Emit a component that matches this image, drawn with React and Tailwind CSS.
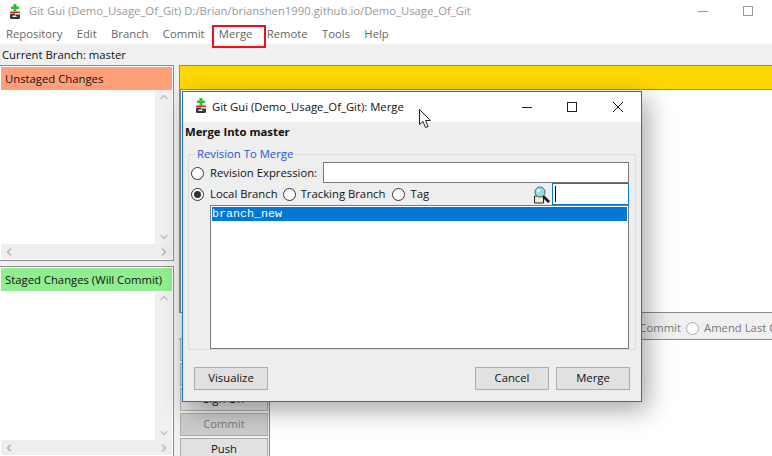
import { ChevronUp, ChevronDown, ChevronLeft, ChevronRight } from "lucide-react";

const menus = ["Repository", "Edit", "Branch", "Commit", "Merge", "Remote", "Tools", "Help"];

const GitIcon = ({ className }) => (
    <svg className={className} viewBox="0 0 12 16" width="12" height="16">
        <path d="M4.500 0h3v2.500H10v2.500H7.500v2.500h-3V5H2V2.500h2.500z" fill="#2fbf2f" />
        <rect x="1" y="7.500" width="10" height="1.500" fill="#d8232a" />
        <path d="M6 9.500H2.500a1.500 1.500 0 0 0-1.500 1.500v2.500A1.500 1.500 0 0 0 2.500 15h7A1.500 1.500 0 0 0 11 13.500V10.500H6.500v2H8.500v.5h-5V11.500H6z" fill="#333" />
    </svg>
);

const Radio = ({ checked }) => (
    <span className="w-[13px] h-[13px] rounded-full border border-[#333] bg-white flex items-center justify-center shrink-0">
        {checked && <span className="w-[7px] h-[7px] rounded-full bg-[#333]" />}
    </span>
);

const ListPanel = ({ title, color, className }) => (
    <div className={"border border-[#8a8a8a] border-l-0 p-[1px] flex flex-col bg-white " + className}>
        <div className={"h-[23px] flex items-center pl-[4px] pt-[1px] text-[11.3px] text-[#111] whitespace-nowrap " + color}>{title}</div>
        <div className="flex-1 flex min-h-0">
            <div className="flex-1" />
            <div className="w-[17px] flex flex-col items-center justify-between bg-[#f0f0f0] py-[1px] text-[#c4c4c4]">
                <ChevronUp size={12} strokeWidth={3} />
                <ChevronDown size={12} strokeWidth={3} />
            </div>
        </div>
        <div className="h-[15px] bg-[#eeeeee] flex items-center justify-between px-[2px] text-[#b5b5b5]">
            <ChevronLeft size={12} strokeWidth={3} />
            <ChevronRight size={12} strokeWidth={3} />
        </div>
    </div>
);

const SideButton = ({ label, disabled }) => (
    <div className={"h-[23px] shrink-0 border border-[#adadad] flex items-center justify-center text-[11.3px] " + (disabled ? "bg-[#cccccc] text-[#777]" : "bg-[#e1e1e1] text-[#111]")}>
        {label}
    </div>
);

const DialogButton = ({ label }) => (
    <div className="w-[74px] h-[23px] border border-[#adadad] bg-[#e1e1e1] flex items-center justify-center text-[11.3px] text-[#111]">
        {label}
    </div>
);

const MergeDialog = () => (
    <div className="absolute left-[182px] top-[91px] w-[460px] h-[311px] border border-[#1a76c4] bg-[#eeeeee] flex flex-col shadow-[6px_8px_24px_rgba(0,0,0,0.35)]">
        <div className="h-[30px] bg-white flex items-center shrink-0">
            <GitIcon className="ml-[12px] mr-[5px] mt-[-3px]" />
            <span className="text-[11.3px] text-[#111] pt-[1px]">Git Gui (Demo_Usage_Of_Git): Merge</span>
            <div className="ml-auto flex items-center text-[#222]">
                <svg width="12" height="12" viewBox="0 0 12 12" className="mr-[33px]"><path d="M1 6.500h10" stroke="#222" /></svg>
                <svg width="12" height="12" viewBox="0 0 12 12" className="mr-[34px]"><rect x="1.500" y="1.500" width="9" height="9" fill="none" stroke="#222" /></svg>
                <svg width="12" height="12" viewBox="0 0 12 12" className="mr-[17px]"><path d="M1 1l10 10M11 1L1 11" stroke="#222" /></svg>
            </div>
        </div>
        <div className="h-[21px] pl-[2px] flex items-center font-bold text-[11.3px] text-[#111] shrink-0">Merge Into master</div>
        <div className="relative ml-[5px] mr-[5px] mt-[11px] h-[196px] border border-[#dcdcdc] pl-[2px] pr-[6px] pt-[7px] flex flex-col shrink-0">
            <span className="absolute left-[6px] top-[-9px] bg-[#eeeeee] px-[2px] text-[11.3px] leading-[16px] text-[#2a52d8]">Revision To Merge</span>
            <div className="h-[21px] flex items-center text-[11.3px] text-[#111] shrink-0">
                <span className="mr-[6px] mt-[1px]"><Radio /></span>
                <span className="flex-1 whitespace-nowrap pt-[1px]">Revision Expression:</span>
                <div className="w-[306px] h-[21px] border border-[#7a7a7a] bg-white" />
            </div>
            <div className="h-[22px] flex items-center text-[11.3px] text-[#111] shrink-0">
                <span className="mr-[6px]"><Radio checked /></span>
                <span className="mr-[5px] whitespace-nowrap">Local Branch</span>
                <span className="mr-[5px]"><Radio /></span>
                <span className="mr-[7px] whitespace-nowrap">Tracking Branch</span>
                <span className="mr-[5px]"><Radio /></span>
                <span>Tag</span>
                <svg width="17" height="18" viewBox="0 0 17 18" className="ml-auto mr-[2px] mt-[1px]">
                    <path d="M1.500 10h9v7h-9z" fill="#f5e8cf" stroke="#222" />
                    <path d="M10 10l6 6" stroke="#111" strokeWidth="2.500" />
                    <circle cx="7" cy="6" r="5" fill="#8fe0e0" stroke="#4a6a6a" />
                    <circle cx="5.500" cy="4.500" r="1.500" fill="#e4ffff" />
                </svg>
                <div className="w-[77px] h-[22px] border border-[#0078d7] bg-white flex items-center pl-[2px]">
                    <span className="w-[1px] h-[16px] bg-black" />
                </div>
            </div>
            <div className="flex-1 ml-[19px] border border-[#7a7a7a] bg-white p-[1px] min-h-0">
                <div className="h-[14px] bg-[#0078d7] text-white font-['Liberation_Mono',monospace] text-[11.67px] leading-[14px]">branch_new</div>
            </div>
        </div>
        <div className="flex items-center justify-between px-[11px] mt-[17px]">
            <DialogButton label="Visualize" />
            <div className="flex gap-[7px]">
                <DialogButton label="Cancel" />
                <DialogButton label="Merge" />
            </div>
        </div>
    </div>
);

export default function App() {
    return (
        <div className="relative w-[772px] h-[456px] overflow-hidden bg-white font-['Open_Sans',sans-serif] flex flex-col">
            <div className="h-[22px] flex items-center shrink-0">
                <GitIcon className="ml-[9px] mr-[8px] mt-[1px]" />
                <span className="text-[11.3px] text-[#999] pt-[1px]">Git Gui (Demo_Usage_Of_Git) D:/Brian/brianshen1990.github.io/Demo_Usage_Of_Git</span>
                <div className="ml-auto flex items-center">
                    <span className="w-[10px] h-[1px] bg-[#999] mr-[35px]" />
                    <span className="w-[10px] h-[10px] border border-[#999] mr-[19px]" />
                </div>
            </div>
            <div className="h-[22px] flex items-center pl-[6px] pt-[3px] gap-[14.3px] shrink-0 relative">
                {menus.map((m) => (
                    <span key={m} className="text-[11.3px] text-[#666]">{m}</span>
                ))}
                <span className="absolute left-[212px] top-[3px] w-[54px] h-[23px] border-2 border-[#e8101c]" />
            </div>
            <div className="h-[21px] bg-[#f0f0f0] flex items-center pl-[2px] pt-[2px] text-[11.3px] text-[#111] shrink-0">Current Branch: master</div>
            <div className="flex-1 flex min-h-0 bg-[#f0f0f0]">
                <div className="w-[174px] flex flex-col gap-[5px] shrink-0">
                    <ListPanel title="Unstaged Changes" color="bg-[#ffa07a]" className="h-[196px]" />
                    <ListPanel title="Staged Changes (Will Commit)" color="bg-[#90ee90]" className="flex-1 border-b-0" />
                </div>
                <div className="flex-1 ml-[5px] flex flex-col bg-white">
                    <div className="h-[25px] bg-[#ffd700] border border-[#8a8a8a] border-r-0 shrink-0" />
                    <div className="h-[222px] border-l-2 border-[#8a8a8a] shrink-0" />
                    <div className="h-[28px] bg-[#f0f0f0] border-y border-[#8a8a8a] flex items-center justify-end pt-[4px] text-[11.3px] text-[#777] whitespace-nowrap shrink-0">
                        <span className="mr-[5px]">Commit</span>
                        <span className="w-[13px] h-[13px] rounded-full border border-[#aaa] bg-white mr-[5px] shrink-0" />
                        <span className="w-[68px] overflow-hidden shrink-0">Amend Last Commit</span>
                    </div>
                    <div className="flex-1 flex min-h-0">
                        <div className="w-[91px] bg-[#f0f0f0] flex flex-col gap-[2px] justify-end px-[1px] pb-0 mb-[-5px] border-r border-[#8a8a8a] shrink-0">
                            <SideButton />
                            <SideButton />
                            <SideButton label="Sign Off" />
                            <SideButton label="Commit" disabled />
                            <SideButton label="Push" />
                        </div>
                    </div>
                </div>
            </div>
            <MergeDialog />
            <svg className="absolute left-[419px] top-[109px]" width="13" height="20" viewBox="0 0 13 20">
                <path d="M.500 .500v15l3.500-3 2.500 6 2.500-1-2.500-6h5z" fill="#fff" stroke="#222" />
            </svg>
        </div>
    );
}
